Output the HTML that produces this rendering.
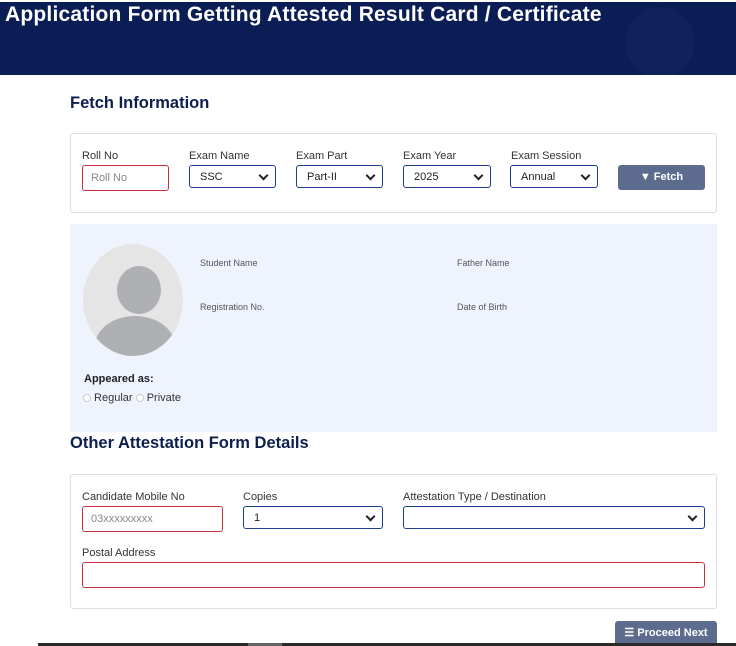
<!DOCTYPE html>
<html><head><style>
*{box-sizing:border-box;margin:0;padding:0}
body{width:736px;height:646px;overflow:hidden;background:#fff;font-family:"Liberation Sans",sans-serif;position:relative;color:#333}
.a{position:absolute}
.hdr{left:0;top:2px;width:736px;height:73px;background:#0b1d55;overflow:hidden}
.hdr h1{position:absolute;left:5px;top:1px;color:#fff;font-size:21px;font-weight:bold;letter-spacing:0.2px;white-space:nowrap}
.circ{border-radius:50%;background:rgba(255,255,255,0.025)}
.h2{color:#0d1f4f;font-weight:bold;font-size:16.5px}
.box{border:1px solid #ddd;border-radius:3px;background:#fff}
.lbl{font-size:11px;color:#333}
.in{height:26px;border:1px solid #c9303e;border-radius:3px;font-size:11px;color:#888;padding:6px 8px}
.sel{height:23px;border:1px solid #1e3d8f;border-radius:3px;font-size:11px;color:#222;padding:5px 10px}
.sel:after{content:"";position:absolute;right:8px;top:6px;width:5px;height:5px;border-right:2px solid #222;border-bottom:2px solid #222;transform:rotate(45deg)}
.btn{background:#5d6c8e;color:#fff;font-size:11px;font-weight:bold;border-radius:3px;text-align:center}
.sm{font-size:9px;color:#555}
.rad{width:8px;height:8px;border:1px solid #ccc;border-radius:50%;display:inline-block;vertical-align:-1px;background:#fff}
</style></head><body>
<div class="a hdr">
<div class="a circ" style="left:625px;top:5px;width:70px;height:70px"></div>
<h1>Application Form Getting Attested Result Card / Certificate</h1>
</div>
<div class="a h2" style="left:70px;top:94px">Fetch Information</div>
<div class="a box" style="left:70px;top:133px;width:647px;height:80px"></div>
<div class="a lbl" style="left:82px;top:150px">Roll No</div>
<div class="a in" style="left:82px;top:165px;width:87px">Roll No</div>
<div class="a lbl" style="left:189px;top:150px">Exam Name</div>
<div class="a sel" style="left:189px;top:165px;width:87px">SSC</div>
<div class="a lbl" style="left:296px;top:150px">Exam Part</div>
<div class="a sel" style="left:296px;top:165px;width:87px">Part-II</div>
<div class="a lbl" style="left:403px;top:150px">Exam Year</div>
<div class="a sel" style="left:403px;top:165px;width:88px">2025</div>
<div class="a lbl" style="left:511px;top:150px">Exam Session</div>
<div class="a sel" style="left:510px;top:165px;width:88px">Annual</div>
<div class="a btn" style="left:618px;top:165px;width:87px;height:25px;line-height:25px">&#9660;&#xFE0E; Fetch</div>
<div class="a" style="left:70px;top:224px;width:647px;height:208px;background:#eef3fe"></div>
<div class="a" style="left:83px;top:244px;width:100px;height:112px;border-radius:50%;background:#e5e5e5;overflow:hidden">
<div class="a" style="left:34px;top:22px;width:44px;height:48px;border-radius:50%;background:#aeb0b3"></div>
<div class="a" style="left:12px;top:72px;width:80px;height:60px;border-radius:50% 50% 0 0;background:#aeb0b3"></div>
</div>
<div class="a sm" style="left:200px;top:258px">Student Name</div>
<div class="a sm" style="left:457px;top:258px">Father Name</div>
<div class="a sm" style="left:200px;top:302px">Registration No.</div>
<div class="a sm" style="left:457px;top:302px">Date of Birth</div>
<div class="a" style="left:84px;top:373px;font-size:11px;font-weight:bold;color:#222">Appeared as:</div>
<div class="a" style="left:83px;top:392px;font-size:11px;color:#333"><span class="rad"></span> Regular <span class="rad"></span> Private</div>
<div class="a h2" style="left:70px;top:434px">Other Attestation Form Details</div>
<div class="a box" style="left:70px;top:474px;width:647px;height:135px"></div>
<div class="a lbl" style="left:82px;top:491px">Candidate Mobile No</div>
<div class="a in" style="left:82px;top:506px;width:141px">03xxxxxxxxx</div>
<div class="a lbl" style="left:243px;top:491px">Copies</div>
<div class="a sel" style="left:243px;top:506px;width:140px">1</div>
<div class="a lbl" style="left:403px;top:491px">Attestation Type / Destination</div>
<div class="a sel" style="left:403px;top:506px;width:302px"></div>
<div class="a lbl" style="left:82px;top:547px">Postal Address</div>
<div class="a in" style="left:82px;top:562px;width:623px;height:26px"></div>
<div class="a btn" style="left:615px;top:621px;width:102px;height:25px;line-height:25px;border-radius:3px 3px 0 0">&#9776; Proceed Next</div>
<div class="a" style="left:38px;top:643px;width:698px;height:3px;background:#2a2a2a"></div>
<div class="a" style="left:248px;top:643px;width:34px;height:3px;background:#666"></div>
</body></html>
